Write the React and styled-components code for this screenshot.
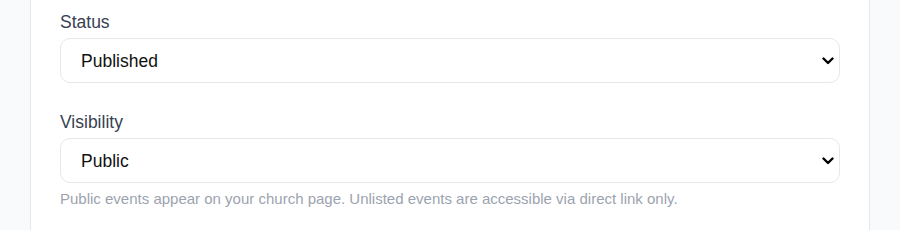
import React from "react"
import styled, { createGlobalStyle } from "styled-components"

const GlobalStyles = createGlobalStyle`
  html, body {
    margin: 0;
    padding: 0;
    background: #f8fafc;
    font-family: "Liberation Sans", Arial, sans-serif;
  }
`

const Page = styled.div`
  padding: 0 30px;
  height: 230px;
  overflow: hidden;
`

const Card = styled.div`
  background: #ffffff;
  border: 1px solid #e5e7eb;
  border-top: none;
  padding: 10px 29px 40px;
  min-height: 260px;
`

const Field = styled.div`
  display: flex;
  flex-direction: column;
  margin-bottom: 27px;
`

const Label = styled.label`
  font-size: 17.5px;
  color: #374151;
  line-height: 24px;
  margin-bottom: 4px;
`

const SelectWrap = styled.div`
  position: relative;
`

const Select = styled.select`
  display: block;
  appearance: none;
  height: 45px;
  width: 100%;
  border: 1px solid #e5e7eb;
  border-radius: 10px;
  background: #ffffff;
  font-family: "Liberation Sans", Arial, sans-serif;
  font-size: 17.5px;
  color: #111111;
  padding: 1px 30px 0 20px;
  outline: none;
`

const Chevron = styled.svg`
  position: absolute;
  right: 6px;
  top: 50%;
  width: 12px;
  height: 8px;
  margin-top: -4px;
  pointer-events: none;
`

const Hint = styled.p`
  margin: 7px 0 0;
  font-size: 15px;
  line-height: 18px;
  color: #9ca3af;
`

function Dropdown({ id, value, options }) {
  return (
    <SelectWrap>
      <Select id={id} defaultValue={value}>
        {options.map(o => (
          <option key={o.value} value={o.value}>{o.label}</option>
        ))}
      </Select>
      <Chevron viewBox="0 0 12 8">
        <path d="M1.5 1.5 L6 6 L10.5 1.5" fill="none" stroke="#000" strokeWidth="2.4" strokeLinecap="round" strokeLinejoin="round" />
      </Chevron>
    </SelectWrap>
  )
}

export default function App() {
  return (
    <Page>
      <GlobalStyles />
      <Card>
        <Field>
          <Label htmlFor="status">Status</Label>
          <Dropdown
            id="status"
            value="published"
            options={[
              { value: "draft", label: "Draft" },
              { value: "published", label: "Published" },
            ]}
          />
        </Field>
        <Field>
          <Label htmlFor="visibility">Visibility</Label>
          <Dropdown
            id="visibility"
            value="public"
            options={[
              { value: "public", label: "Public" },
              { value: "unlisted", label: "Unlisted" },
            ]}
          />
          <Hint>
            Public events appear on your church page. Unlisted events are accessible via direct link only.
          </Hint>
        </Field>
      </Card>
    </Page>
  )
}
